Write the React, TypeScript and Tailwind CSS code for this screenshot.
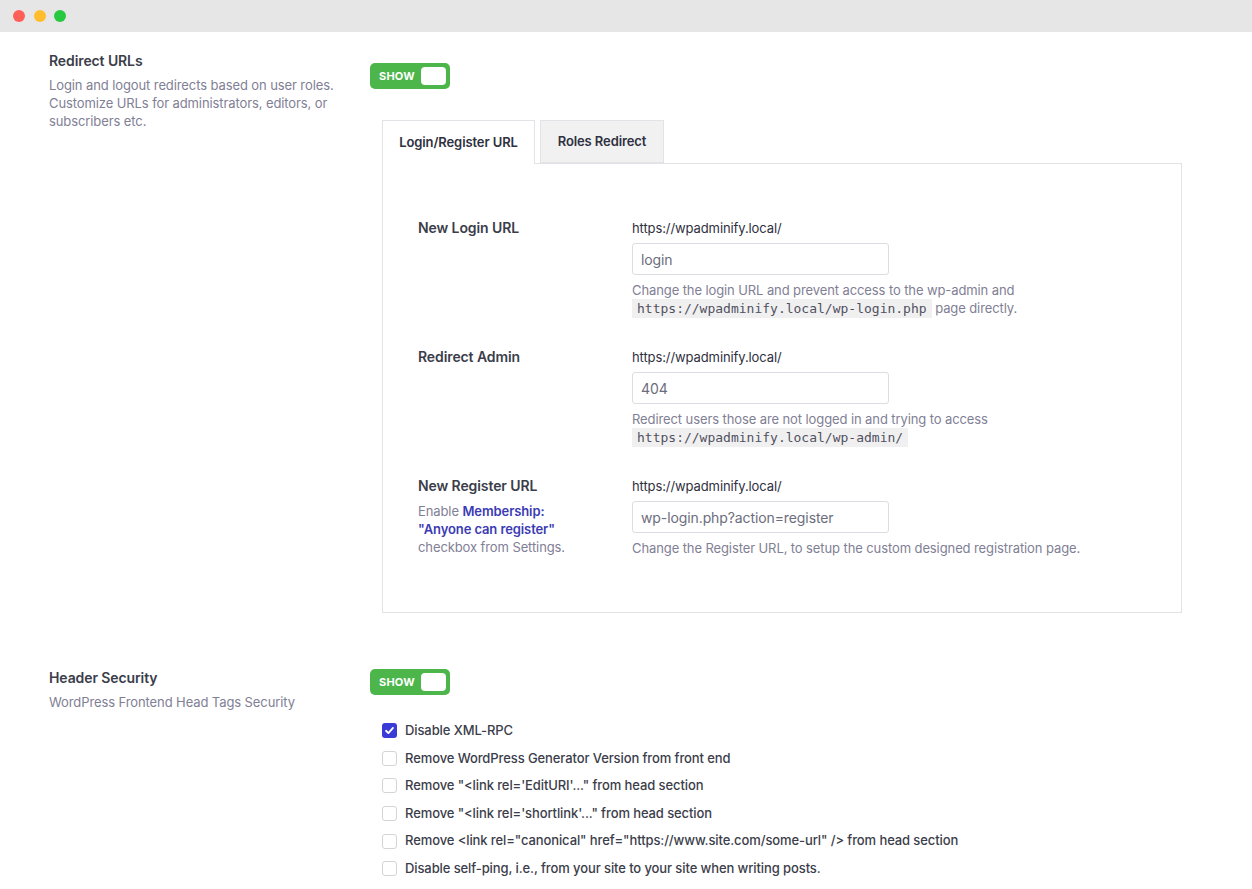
import React from "react";

function Toggle() {
  return (
    <div className="flex h-[26px] w-[80px] items-center justify-between rounded-[5px] bg-[#4cb64a] pl-[9px] pr-[4px]">
      <span className="text-[11px] font-bold tracking-[0.2px] text-white">SHOW</span>
      <span className="h-[18px] w-[25px] rounded-[4px] bg-white" />
    </div>
  );
}

function Code({ children }: { children: React.ReactNode }) {
  return (
    <code
      className="bg-[#f0f0f1] px-[5px] py-[2px] text-[13px] tracking-normal text-[#50515f]"
      style={{ fontFamily: '"DejaVu Sans Mono", monospace' }}
    >
      {children}
    </code>
  );
}

function Checkbox({ checked, label }: { checked?: boolean; label: string }) {
  return (
    <div className="flex h-[27.6px] items-center gap-[8px]">
      {checked ? (
        <span className="flex h-[15px] w-[15px] items-center justify-center rounded-[3px] bg-[#3a3ad6]">
          <svg width="11" height="11" viewBox="0 0 12 12" fill="none">
            <path d="M2.2 6.3 4.8 8.8 9.8 3.2" stroke="white" strokeWidth="2" strokeLinecap="round" strokeLinejoin="round" />
          </svg>
        </span>
      ) : (
        <span className="h-[15px] w-[15px] rounded-[3px] border border-[#d3d4d8] bg-white" />
      )}
      <span className="text-[13px] font-medium text-[#3b3d4a]">{label}</span>
    </div>
  );
}

function Row({
  label,
  value,
  help,
  extra,
}: {
  label: string;
  value: string;
  help: React.ReactNode;
  extra?: React.ReactNode;
}) {
  return (
    <div className="flex">
      <div className="w-[214px] shrink-0">
        <div className="text-[14px] font-semibold leading-[18px] text-[#3b3d4a]">{label}</div>
        {extra}
      </div>
      <div className="flex flex-col">
        <div className="text-[13px] leading-[18px] text-[#2f3040]">https://wpadminify.local/</div>
        <div className="mt-[6px] flex h-[32px] w-[257px] items-center rounded-[3px] border border-[#dcdde2] bg-white px-[8px] text-[14px] text-[#6b6d7c]">
          {value}
        </div>
        <div className="mt-[6px] text-[13px] leading-[18px] text-[#7f8095]">{help}</div>
      </div>
    </div>
  );
}

export default function App() {
  return (
    <div
      className="min-h-[889px] w-full bg-white tracking-[-0.1px]"
      style={{ fontFamily: 'Inter, "Noto Sans", sans-serif' }}
    >
      <div className="flex h-[32px] items-center gap-[8.5px] bg-[#e6e6e6] pl-[13px]">
        <span className="h-[12px] w-[12px] rounded-full bg-[#fe5f57]" />
        <span className="h-[12px] w-[12px] rounded-full bg-[#febc2e]" />
        <span className="h-[12px] w-[12px] rounded-full bg-[#28c840]" />
      </div>

      <div className="flex pl-[49px] pt-[20px]">
        <div className="w-[321px] shrink-0">
          <div className="text-[14px] font-semibold leading-[18px] text-[#3b3d4a]">Redirect URLs</div>
          <div className="mt-[6px] w-[295px] text-[13px] leading-[18px] text-[#7f8095]">
            Login and logout redirects based on user roles. Customize URLs for administrators, editors, or subscribers etc.
          </div>
        </div>
        <div className="flex flex-col pt-[11px]">
          <Toggle />
          <div className="ml-[12px] mt-[31px] w-[800px]">
            <div className="flex gap-[5px]">
              <div className="relative -mb-px flex h-[44px] w-[153px] items-center justify-center border border-b-0 border-[#e2e3e6] bg-white pt-[1px] text-[13px] font-semibold text-[#2f3040]">
                Login/Register URL
              </div>
              <div className="flex h-[43px] w-[124px] items-center justify-center border border-[#e2e3e6] bg-[#f1f1f2] pt-[1px] text-[13px] font-semibold text-[#2f3040]">
                Roles Redirect
              </div>
            </div>
            <div className="flex h-[450px] flex-col gap-[30px] border border-[#e2e3e6] px-[35px] pt-[55px]">
              <Row
                label="New Login URL"
                value="login"
                help={
                  <>
                    Change the login URL and prevent access to the wp-admin and
                    <br />
                    <Code>https://wpadminify.local/wp-login.php</Code> page directly.
                  </>
                }
              />
              <Row
                label="Redirect Admin"
                value="404"
                help={
                  <>
                    Redirect users those are not logged in and trying to access
                    <br />
                    <Code>https://wpadminify.local/wp-admin/</Code>
                  </>
                }
              />
              <Row
                label="New Register URL"
                value="wp-login.php?action=register"
                help={<>Change the Register URL, to setup the custom designed registration page.</>}
                extra={
                  <div className="mt-[7px] w-[160px] text-[13px] leading-[18px] text-[#7f8095]">
                    <div>
                      Enable <span className="font-semibold text-[#3b3bb3]">Membership:</span>
                    </div>
                    <div className="font-semibold text-[#3b3bb3]">"Anyone can register"</div>
                    <div>checkbox from Settings.</div>
                  </div>
                }
              />
            </div>
          </div>
        </div>
      </div>

      <div className="mt-[56px] flex pl-[49px]">
        <div className="w-[321px] shrink-0">
          <div className="text-[14px] font-semibold leading-[18px] text-[#3b3d4a]">Header Security</div>
          <div className="mt-[6px] text-[13px] leading-[18px] text-[#7f8095]">
            WordPress Frontend Head Tags Security
          </div>
        </div>
        <div className="flex flex-col">
          <Toggle />
          <div className="ml-[12px] mt-[22px] flex flex-col">
            <Checkbox checked label="Disable XML-RPC" />
            <Checkbox label="Remove WordPress Generator Version from front end" />
            <Checkbox label={"Remove \"<link rel='EditURI'...\" from head section"} />
            <Checkbox label={"Remove \"<link rel='shortlink'...\" from head section"} />
            <Checkbox label={'Remove <link rel="canonical" href="https://www.site.com/some-url" /> from head section'} />
            <Checkbox label="Disable self-ping, i.e., from your site to your site when writing posts." />
          </div>
        </div>
      </div>
    </div>
  );
}
